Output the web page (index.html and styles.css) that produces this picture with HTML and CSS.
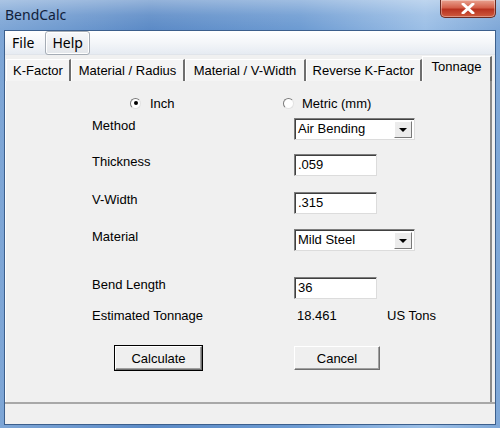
FILE: index.html
```html
<!DOCTYPE html>
<html lang="en">
<head>
  <meta charset="UTF-8">
  <title>BendCalc</title>
  <link rel="stylesheet" href="styles.css">
</head>
<body>
  <div class="window">
    <div class="titlebar">
      <span class="title">BendCalc</span>
      <button class="close-btn" aria-label="Close">
        <svg width="14" height="11" viewBox="0 0 14 11"><path d="M2 1 L12 10 M12 1 L2 10" stroke="#fff" stroke-width="3" stroke-linecap="round"/></svg>
      </button>
    </div>
    <div class="client">
      <div class="menubar">
        <span class="menu-item">File</span>
        <span class="menu-item active">Help</span>
      </div>
      <div class="tabs">
        <div class="tab tab-kfactor">K-Factor</div>
        <div class="tab tab-radius">Material / Radius</div>
        <div class="tab tab-vwidth">Material / V-Width</div>
        <div class="tab tab-reverse">Reverse K-Factor</div>
        <div class="tab tab-tonnage selected">Tonnage</div>
      </div>
      <div class="panel">
        <div class="units">
          <label class="radio radio-inch"><span class="radio-dot checked"></span>Inch</label>
          <label class="radio radio-metric"><span class="radio-dot"></span>Metric (mm)</label>
        </div>

        <div class="row row-method">
          <span class="label">Method</span>
          <div class="select wide"><span class="select-text">Air Bending</span><span class="select-arrow"></span></div>
        </div>
        <div class="row row-thickness">
          <span class="label">Thickness</span>
          <div class="input">.059</div>
        </div>
        <div class="row row-vwidth">
          <span class="label">V-Width</span>
          <div class="input">.315</div>
        </div>
        <div class="row row-material">
          <span class="label">Material</span>
          <div class="select wide"><span class="select-text">Mild Steel</span><span class="select-arrow"></span></div>
        </div>
        <div class="row row-length">
          <span class="label">Bend Length</span>
          <div class="input">36</div>
        </div>
        <div class="row row-result">
          <span class="label">Estimated Tonnage</span>
          <span class="value">18.461</span>
          <span class="unit">US Tons</span>
        </div>

        <div class="actions">
          <button class="btn btn-default">Calculate</button>
          <button class="btn btn-cancel">Cancel</button>
        </div>
      </div>
      <div class="statusbar"></div>
    </div>
  </div>
</body>
</html>
```

FILE: styles.css
```css
* {
  box-sizing: border-box;
  margin: 0;
  padding: 0;
}

body {
  width: 500px;
  height: 428px;
  overflow: hidden;
  font-family: "Liberation Sans", Arial, sans-serif;
  font-size: 13px;
  color: #000;
  background: #5f8dc6;
}

.window {
  height: 428px;
  display: flex;
  flex-direction: column;
  background: linear-gradient(90deg, #7ea6d6 0%, #5b8ac6 30%, #6d9bd2 60%, #9cbfe6 85%, #7ea7d7 100%);
}

/* title bar */
.titlebar {
  height: 30px;
  flex-shrink: 0;
  display: flex;
  align-items: flex-start;
  justify-content: space-between;
  background: linear-gradient(180deg, rgba(255,255,255,0.35) 0%, rgba(255,255,255,0.1) 50%, rgba(255,255,255,0) 100%);
}

.title {
  font-family: "Noto Sans", sans-serif;
  font-size: 14px;
  color: #10203a;
  padding: 5px 0 0 5px;
}

.close-btn {
  width: 56px;
  height: 18px;
  margin-right: 4px;
  border: 1px solid #6b2b22;
  border-top: none;
  border-radius: 0 0 5px 5px;
  background: linear-gradient(180deg, #e9a290 0%, #d4604a 45%, #b8321f 55%, #cf5b3e 100%);
  display: flex;
  align-items: center;
  justify-content: center;
  box-shadow: inset 0 0 0 1px rgba(255,255,255,0.35);
}

/* client area */
.client {
  flex: 1;
  margin: 0 4px 3px 4px;
  border: 1px solid #3c5f8c;
  background: #f0f0f0;
  display: flex;
  flex-direction: column;
}

.menubar {
  height: 24px;
  flex-shrink: 0;
  display: flex;
  align-items: center;
  gap: 4px;
  padding: 0;
  background: linear-gradient(180deg, #ffffff 0%, #f4f6f9 50%, #e6ebf2 100%);
  border-bottom: 1px solid #e0e4ea;
}

.menu-item {
  font-family: "Noto Sans", sans-serif;
  font-size: 14px;
  padding: 1px 6px 2px;
  border: 1px solid transparent;
  border-radius: 3px;
}

.menu-item.active {
  border-color: #a5acb5;
  background: linear-gradient(180deg, #f7f8fa 0%, #e3e6ea 100%);
  box-shadow: inset 0 0 0 1px #fff;
}

/* tabs */
.tabs {
  height: 26px;
  flex-shrink: 0;
  display: flex;
  align-items: flex-end;
  padding-left: 1px;
}

.tab {
  height: 22px;
  display: flex;
  align-items: center;
  justify-content: center;
  background: #f4f4f4;
  border-left: 1px solid #fff;
  border-top: 1px solid #fff;
  border-right: 2px solid #6e6e6e;
  white-space: nowrap;
}

.tab-kfactor { width: 65px; }
.tab-radius { width: 114px; }
.tab-vwidth { width: 121px; }
.tab-reverse { width: 116px; }

.tab.selected {
  width: 70px;
  height: 25px;
  background: #f0f0f0;
  padding-bottom: 6px;
}

.panel {
  flex: 1;
  padding: 14px 0 0 86px;
  border-left: 1px solid #fff;
  border-right: 2px solid #8a8a8a;
  margin-right: 3px;
}

/* unit radios */
.units {
  display: flex;
  height: 16px;
  align-items: center;
  margin-bottom: 7px;
}

.radio {
  display: flex;
  align-items: center;
}

.radio-inch {
  margin-left: 38px;
  gap: 9px;
  width: 153px;
}

.radio-metric {
  gap: 8px;
}

.radio-dot {
  width: 11px;
  height: 11px;
  border-radius: 50%;
  background: #fff;
  border: 1px solid;
  border-color: #7a7a7a #e2e2e2 #e2e2e2 #7a7a7a;
  display: flex;
  align-items: center;
  justify-content: center;
}

.radio-dot.checked::after {
  content: "";
  width: 4px;
  height: 4px;
  border-radius: 50%;
  background: #000;
}

/* form rows */
.row {
  display: flex;
  align-items: flex-start;
  height: 22px;
}

.label {
  width: 202px;
  line-height: 16px;
}

.row-thickness { margin-top: 14px; }
.row-vwidth { margin-top: 16px; }
.row-material { margin-top: 15px; }
.row-length { margin-top: 26px; }
.row-result { margin-top: 9px; height: 16px; }

.input,
.select {
  height: 22px;
  background: #fff;
  border: 1px solid;
  border-color: #7d7d7d #dcdcdc #dcdcdc #7d7d7d;
  box-shadow: inset 1px 1px 0 #404040;
  line-height: 20px;
  padding-left: 3px;
}

.input {
  width: 83px;
}

.select {
  width: 121px;
  display: flex;
  justify-content: space-between;
  padding-right: 2px;
}

.select-arrow {
  width: 18px;
  height: 17px;
  margin-top: 2px;
  background: #ececec;
  border: 1px solid;
  border-color: #fff #7a7a7a #7a7a7a #fff;
  display: flex;
  align-items: center;
  justify-content: center;
}

.select-arrow::after {
  content: "";
  border-left: 4px solid transparent;
  border-right: 4px solid transparent;
  border-top: 4px solid #000;
}

.value {
  width: 93px;
  padding-left: 3px;
  line-height: 16px;
}

.unit {
  line-height: 16px;
}

/* buttons */
.actions {
  display: flex;
  margin-top: 22px;
  margin-left: 23px;
}

.btn {
  height: 24px;
  font-family: "Liberation Sans", Arial, sans-serif;
  font-size: 13px;
  color: #000;
  background: #efefef;
  border: 1px solid;
  border-color: #fff #6f6f6f #6f6f6f #fff;
  box-shadow: inset -1px -1px 0 #a0a0a0;
}

.btn-default {
  width: 87px;
  outline: 1px solid #000;
  outline-offset: 0;
}

.btn-cancel {
  width: 86px;
  margin-left: 92px;
}

.statusbar {
  height: 22px;
  flex-shrink: 0;
  border-top: 2px solid #a8a8a8;
  background: #f0f0f0;
}
```
